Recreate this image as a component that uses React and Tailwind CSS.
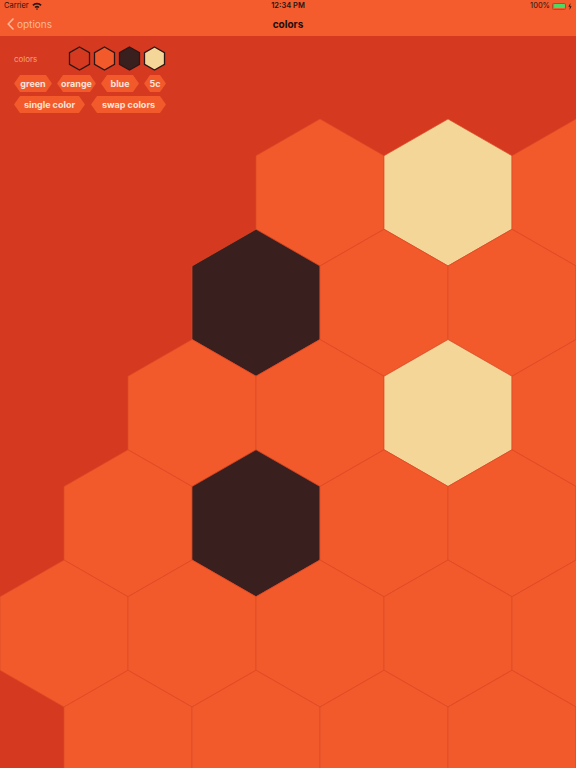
import React from 'react';

const R = 73.5;
const W = 64;
const ROW0 = 192.5;
const STEP = 110.25;

const ORANGE = '#f2592b';
const DARK = '#3a1f1f';
const CREAM = '#f4d698';

// board rows: list of centre x per row
const ROWS = [
  [320, 448, 576],
  [256, 384, 512, 640],
  [192, 320, 448, 576],
  [128, 256, 384, 512, 640],
  [64, 192, 320, 448, 576],
  [128, 256, 384, 512, 640],
];

const SPECIAL = {
  '0-448': CREAM,
  '1-256': DARK,
  '2-448': CREAM,
  '3-256': DARK,
};

function hexPoints(cx, cy) {
  return [
    [cx, cy - R],
    [cx + W, cy - R / 2],
    [cx + W, cy + R / 2],
    [cx, cy + R],
    [cx - W, cy + R / 2],
    [cx - W, cy - R / 2],
  ]
    .map((p) => p.join(','))
    .join(' ');
}

function Board() {
  return (
    <svg
      className="absolute inset-0 w-full h-full"
      viewBox="0 36 576 732"
      preserveAspectRatio="xMinYMin slice"
    >
      {ROWS.map((xs, r) =>
        xs.map((cx) => (
          <polygon
            key={`${r}-${cx}`}
            points={hexPoints(cx, ROW0 + r * STEP)}
            fill={SPECIAL[`${r}-${cx}`] || ORANGE}
            stroke="#dc4a26"
            strokeWidth="0.7"
          />
        ))
      )}
    </svg>
  );
}

function Swatch({ fill }) {
  return (
    <svg width="23" height="25" viewBox="0 0 23 25">
      <polygon
        points="11.5,1 21.5,6.75 21.5,18.25 11.5,24 1.5,18.25 1.5,6.75"
        fill={fill}
        stroke="#2e1616"
        strokeWidth="1.3"
      />
    </svg>
  );
}

function HexButton({ label, width }) {
  return (
    <div
      className={`${width} h-[17px] flex items-center justify-center bg-[#f2592b] text-[#fde3d6] text-[9px] font-bold [clip-path:polygon(6px_0,calc(100%-6px)_0,100%_50%,calc(100%-6px)_100%,6px_100%,0_50%)]`}
    >
      {label}
    </div>
  );
}

export default function App() {
  return (
    <div
      className="w-[576px] h-[768px] overflow-hidden flex flex-col bg-[#d5391f]"
      style={{ fontFamily: 'Inter, "Liberation Sans", sans-serif' }}
    >
      {/* Status + nav bar */}
      <div className="bg-[#f45c2d] h-[36px] flex flex-col shrink-0">
        <div className="h-[12px] px-[4px] flex items-center justify-between text-[7.5px] text-[#2a1410]">
          <div className="flex items-center gap-[3px] w-[120px]">
            <span>Carrier</span>
            <svg width="10" height="8" viewBox="0 0 9 7">
              <path d="M0.3 2.4 A6 6 0 0 1 8.7 2.4 L7.6 3.5 A4.5 4.5 0 0 0 1.4 3.5 Z" fill="#2a1410" />
              <path d="M2.2 4.3 A3.3 3.3 0 0 1 6.8 4.3 L5.7 5.4 A1.8 1.8 0 0 0 3.3 5.4 Z" fill="#2a1410" />
              <circle cx="4.5" cy="6.3" r="0.7" fill="#2a1410" />
            </svg>
          </div>
          <span className="font-semibold">12:34 PM</span>
          <div className="flex items-center justify-end gap-[2px] w-[120px]">
            <span>100%</span>
            <div className="w-[14px] h-[7px] rounded-[1.5px] border border-[#b04a2a] p-[0.5px]">
              <div className="w-full h-full bg-[#4cd964] rounded-[1px]" />
            </div>
            <svg width="4" height="7" viewBox="0 0 4 7">
              <path d="M2.5 0 L0.4 3.8 H1.9 L1.5 7 L3.6 3.2 H2.1 Z" fill="#2a1410" />
            </svg>
          </div>
        </div>
        <div className="flex-1 relative flex items-center justify-center">
          <div className="absolute left-[7px] top-0 h-full flex items-center gap-[3px] text-[#fcb798] text-[10px]">
            <svg width="7" height="12" viewBox="0 0 7 12">
              <path d="M6 1 L1.2 6 L6 11" fill="none" stroke="#fcb798" strokeWidth="1.6" strokeLinecap="round" strokeLinejoin="round" />
            </svg>
            <span>options</span>
          </div>
          <span className="text-[10px] font-bold text-[#1c0d0a]">colors</span>
        </div>
      </div>

      {/* Main */}
      <div className="relative flex-1">
        <Board />
        <div className="relative pl-[14px] pt-[10px] flex flex-col gap-[4px] w-[170px]">
          <div className="flex items-center">
            <span className="text-[8px] text-[#f7a07c] w-[54px]">colors</span>
            <div className="flex items-center gap-[2px]">
              <Swatch fill="#d5391f" />
              <Swatch fill="#f2592b" />
              <Swatch fill="#3a1f1f" />
              <Swatch fill="#f4d698" />
            </div>
          </div>
          <div className="flex items-center gap-[5px]">
            <HexButton label="green" width="w-[38px]" />
            <HexButton label="orange" width="w-[39px]" />
            <HexButton label="blue" width="w-[38px]" />
            <HexButton label="5c" width="w-[22px]" />
          </div>
          <div className="flex items-center gap-[6px]">
            <HexButton label="single color" width="w-[71px]" />
            <HexButton label="swap colors" width="w-[75px]" />
          </div>
        </div>
      </div>
    </div>
  );
}
